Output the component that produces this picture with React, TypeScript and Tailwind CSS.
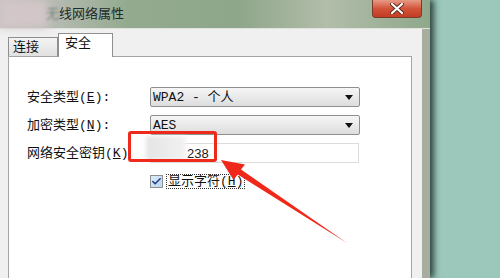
import { Check } from 'lucide-react'

const cjk = { fontFamily: '"Liberation Mono", "Noto Sans CJK SC", monospace' }

function Select({ value }: { value: string }) {
  return (
    <div className="flex h-[20px] w-[210px] items-center justify-between rounded-[2px] border border-[#8e8f8f] bg-gradient-to-b from-[#f6f6f6] to-[#dddddd] pl-[2px] pr-[6px]">
      <span className="text-[13px] leading-none text-[#111]" style={cjk}>{value}</span>
      <svg width="8" height="5" viewBox="0 0 8 5"><path d="M0 0h8L4 5z" fill="#111" /></svg>
    </div>
  )
}

function Label({ text, mnemonic, colon }: { text: string; mnemonic: string; colon?: boolean }) {
  return (
    <div className="w-[123px] text-[13px] leading-none text-[#111]" style={cjk}>
      {text}(<span className="underline">{mnemonic}</span>){colon ? ':' : ''}
    </div>
  )
}

export default function App() {
  return (
    <div className="relative flex h-[278px] w-[500px] overflow-hidden bg-[#9cc8bb]">
      {/* dialog window */}
      <div className="flex w-[430px] shrink-0 flex-col shadow-[4px_0_6px_rgba(20,40,35,0.8)]">
        <div className="relative flex h-[28px] items-center bg-[linear-gradient(90deg,#c9c3c3_0%,#b3b9ae_14%,#93aa8e_30%,#8ea68a_55%,#a8b6a0_70%,#b2bdaa_76%,#8fa88b_100%)] pl-[46px]">
          <div className="absolute left-0 top-0 h-[28px] w-[48px] bg-[#d2c6c8] blur-[4px]" />
          <span className="relative text-[13px] leading-none text-[#1b2a2c]" style={cjk}>
            <span className="opacity-40 blur-[1px]">无</span>线网络属性
          </span>
          <div className="ml-auto mr-[8px] mt-[-10px] flex h-[18px] w-[50px] items-center justify-center rounded-b-[4px] border border-t-0 border-[#7a3a2c] bg-gradient-to-b from-[#e79a86] via-[#d2543a] to-[#c23c22]">
            <svg width="14" height="11" viewBox="0 0 14 11">
              <path d="M2 1l10 9M12 1L2 10" stroke="#5a2a20" strokeWidth="4" strokeLinecap="round" />
              <path d="M2 1l10 9M12 1L2 10" stroke="#fff" strokeWidth="2.2" strokeLinecap="round" />
            </svg>
          </div>
        </div>
        <div className="flex flex-1 border-t border-[#dfe3dc]">
          <div className="flex flex-1 flex-col bg-[#f0f0f0] pl-[8px] pr-[10px] pt-[4px]">
            <div className="flex items-end">
              <div className="flex h-[19px] w-[50px] items-center border border-b-0 border-[#8e8f8f] bg-gradient-to-b from-[#f3f3f3] to-[#e1e1e1] pl-[4px] text-[13px] leading-none text-[#111]" style={cjk}>
                连接
              </div>
              <div className="relative -mb-px flex h-[24px] w-[55px] items-start border border-b-0 border-[#8e8f8f] bg-white pl-[6px] pt-[3px] text-[13px] leading-none text-[#111]" style={cjk}>
                安全
              </div>
            </div>
            <div className="flex flex-1 flex-col gap-[8px] border border-b-0 border-[#a4a4a4] bg-white pl-[18px] pt-[30px]">
              <div className="flex items-center">
                <Label text="安全类型" mnemonic="E" colon />
                <Select value="WPA2 - 个人" />
              </div>
              <div className="flex items-center">
                <Label text="加密类型" mnemonic="N" colon />
                <Select value="AES" />
              </div>
              <div className="flex items-center">
                <Label text="网络安全密钥" mnemonic="K" />
                <div className="flex h-[20px] w-[209px] items-center border border-[#dcdcdc] bg-white pl-[36px] text-[13px] leading-none text-[#222]" style={{ fontFamily: '"Liberation Sans", sans-serif' }}>
                  238
                </div>
              </div>
              <div className="mt-[3px] flex items-center pl-[123px]">
                <div className="flex h-[13px] w-[13px] items-center justify-center border border-[#8e8f8f] bg-gradient-to-br from-[#dcecfc] to-[#bcd6f0]">
                  <Check size={11} strokeWidth={3.5} color="#1f3f8a" />
                </div>
                <span className="ml-[3px] border border-dotted border-[#333] px-[1px] text-[13px] leading-none text-[#111]" style={cjk}>
                  显示字符(<span className="underline">H</span>)
                </span>
              </div>
            </div>
          </div>
          <div className="w-[8px] bg-[#a8ad9f]" />
        </div>
      </div>

      {/* blurred key */}
      <div className="absolute left-[146px] top-[136px] h-[24px] w-[40px] bg-gradient-to-r from-[#e4e4e4] to-[#f2f2f2] blur-[2px]" />
      {/* red annotation box */}
      <div className="absolute left-[128px] top-[131px] h-[31px] w-[89px] rounded-[3px] border-[3px] border-[#ee2a1c]" />
      {/* red arrow */}
      <svg className="absolute left-0 top-0" width="500" height="278" viewBox="0 0 500 278">
        <polygon points="221,160 245,164.5 241,169.6 347,243 237.7,174.6 233.5,180" fill="#f0281a" />
      </svg>
    </div>
  )
}
